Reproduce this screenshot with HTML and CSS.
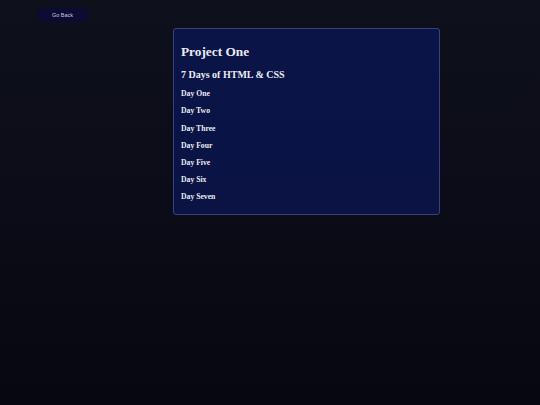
FILE: index.html
```html
<!DOCTYPE html>
<html lang="en">
<head>
<meta charset="utf-8">
<title>Project One</title>
<link rel="stylesheet" href="styles.css">
</head>
<body>
<div class="page">
  <a class="back" href="#">Go Back</a>
  <main class="card">
    <h1 class="title">Project One</h1>
    <h2 class="subtitle">7 Days of HTML &amp; CSS</h2>
    <ul class="days">
      <li class="day">Day One</li>
      <li class="day">Day Two</li>
      <li class="day">Day Three</li>
      <li class="day">Day Four</li>
      <li class="day">Day Five</li>
      <li class="day">Day Six</li>
      <li class="day">Day Seven</li>
    </ul>
  </main>
</div>
</body>
</html>
```

FILE: styles.css
```css
html, body {
  margin: 0;
  padding: 0;
  height: 100%;
}
body {
  background: linear-gradient(to bottom, #0e101b 0%, #0b0c17 50%, #06070f 100%);
  font-family: "Liberation Serif", "Times New Roman", serif;
  color: #ebebf2;
}
.page {
  padding: 8px 0 0 37px;
  display: flex;
  flex-direction: column;
  align-items: flex-start;
}
.back {
  display: flex;
  align-items: center;
  justify-content: center;
  width: 51px;
  height: 14px;
  border-radius: 7px;
  background: #0b0b33;
  color: #c9c9da;
  font-family: "Liberation Sans", Arial, sans-serif;
  font-size: 5.5px;
  text-decoration: none;
}
.card {
  margin: 6px 0 0 136px;
  width: 267px;
  box-sizing: border-box;
  border: 1px solid #34427e;
  border-radius: 3px;
  background: linear-gradient(to bottom, #0b1447 0%, #0a1344 100%);
  padding: 14.8px 8px 12.3px 7px;
}
.title {
  margin: 0;
  font-size: 13.3px;
  line-height: 16px;
  font-weight: bold;
}
.subtitle {
  margin: 9px 0 0 0;
  font-size: 10px;
  line-height: 12px;
  font-weight: bold;
}
.days {
  list-style: none;
  margin: 8.6px 0 0 0;
  padding: 0;
  display: flex;
  flex-direction: column;
  gap: 7.1px;
}
.day {
  font-size: 7.7px;
  line-height: 10px;
  font-weight: bold;
}
```
